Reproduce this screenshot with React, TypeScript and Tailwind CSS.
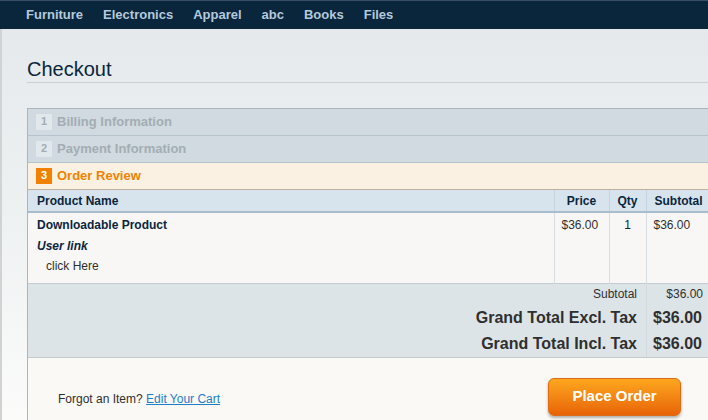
const navItems = ['Furniture', 'Electronics', 'Apparel', 'abc', 'Books', 'Files'];

function Step({ n, label, active }: { n: number; label: string; active?: boolean }) {
  return (
    <div
      className={
        active
          ? 'flex items-center h-[27px] pl-[8px] pb-[1px] bg-[#faf1e3] border-b border-[#bdb1a3]'
          : 'flex items-center h-[27px] pl-[8px] pb-[1px] bg-[#d0dae0] border-b border-[#b4c3cc]'
      }
    >
      <span
        className={
          active
            ? 'w-[16px] h-[16px] flex items-center justify-center text-[11px] font-bold bg-[#f18200] text-white'
            : 'w-[16px] h-[16px] flex items-center justify-center text-[11px] font-bold bg-[#e1e8ec] text-[#a3adb3]'
        }
      >
        {n}
      </span>
      <span className={active ? 'ml-[5px] text-[13px] font-bold text-[#f18200]' : 'ml-[5px] text-[13px] font-bold text-[#a3adb3]'}>
        {label}
      </span>
    </div>
  );
}

export default function App() {
  return (
    <div className="w-[708px] h-[420px] overflow-hidden font-['Liberation_Sans',Arial,sans-serif] bg-gradient-to-b from-[#e3e8eb] via-[#eef1f2] to-[#fbfbfa]">
      <nav className="h-[29px] bg-[#0a263c] border-t border-[#3b5066] flex items-center pl-[26px] gap-[20px]">
        {navItems.map(item => (
          <span key={item} className="text-[13px] font-bold text-[#b4c9dc]">{item}</span>
        ))}
      </nav>

      <div className="flex">
        <div className="w-[2px] shrink-0 bg-[#cfd3d4] h-[391px]" />
        <div className="pl-[25px] w-[710px] shrink-0">
          <h1 className="mt-[28px] text-[20px] leading-[24px] text-[#0a263c] pb-[1px] border-b border-[#cbcfd0]">Checkout</h1>

          <div className="mt-[25px] w-[690px] border-t border-l border-[#aab6bd]">
            <Step n={1} label="Billing Information" />
            <Step n={2} label="Payment Information" />
            <Step n={3} label="Order Review" active />

            <table className="w-full border-collapse text-[12px] text-[#0a263d] table-fixed">
              <colgroup>
                <col className="w-[526px]" />
                <col className="w-[55px]" />
                <col className="w-[37px]" />
                <col />
              </colgroup>
              <thead>
                <tr className="h-[22px] bg-[#d8e4ed] border-b-2 border-[#a7bdcd]">
                  <th className="text-left pl-[9px] font-bold">Product Name</th>
                  <th className="font-bold border-l border-[#c3d4df]">Price</th>
                  <th className="font-bold border-l border-[#c3d4df]">Qty</th>
                  <th className="font-bold border-l border-[#c3d4df] text-left pl-[8px]">Subtotal</th>
                </tr>
              </thead>
              <tbody>
                <tr className="h-[71px] bg-[#f8f7f5] border-b border-[#c3ccd1] align-top">
                  <td className="pl-[9px] pt-[3px]">
                    <div className="font-bold">Downloadable Product</div>
                    <div className="mt-[3px] font-bold italic">User link</div>
                    <div className="mt-[2px] pl-[9px] text-[#2f2f2f]">click Here</div>
                  </td>
                  <td className="pt-[3px] pl-[7px] border-l border-[#d6dee3] text-[#2f2f2f]">$36.00</td>
                  <td className="pt-[3px] text-center border-l border-[#d6dee3]">1</td>
                  <td className="pt-[3px] pl-[7px] border-l border-[#d6dee3] text-[#2f2f2f]">$36.00</td>
                </tr>
              </tbody>
            </table>

            <div className="bg-[#dde4e7] border-b border-[#c6c9ca] text-[#2f2f2f]">
              <div className="flex items-center h-[21px] text-[12px]">
                <span className="w-[618px] text-right pr-[9px]">Subtotal</span>
                <span className="flex-1 border-l border-[#d2dadd] h-full flex items-center justify-end pr-[14px]">$36.00</span>
              </div>
              <div className="flex items-center h-[26px] text-[16px] font-bold">
                <span className="w-[618px] text-right pr-[9px]">Grand Total Excl. Tax</span>
                <span className="flex-1 border-l border-[#d2dadd] h-full flex items-center justify-end pr-[15px]">$36.00</span>
              </div>
              <div className="flex items-center h-[26px] text-[16px] font-bold">
                <span className="w-[618px] text-right pr-[9px]">Grand Total Incl. Tax</span>
                <span className="flex-1 border-l border-[#d2dadd] h-full flex items-center justify-end pr-[15px]">$36.00</span>
              </div>
            </div>

            <div className="bg-[#faf9f6] h-[80px] flex items-start pt-[20px]">
              <p className="ml-[30px] mt-[12px] text-[12px] text-[#2f2f2f]">
                Forgot an Item?{' '}
                <a href="#" className="text-[#1e7ec8] underline">Edit Your Cart</a>
              </p>
              <button className="ml-auto mr-[36px] w-[133px] h-[38px] rounded-[6px] border border-[#dd6b18] bg-gradient-to-b from-[#fda71f] to-[#e76307] text-white text-[15px] font-bold shadow-[0_2px_3px_rgba(0,0,0,0.3)]">
                Place Order
              </button>
            </div>
          </div>
        </div>
      </div>
    </div>
  );
}
